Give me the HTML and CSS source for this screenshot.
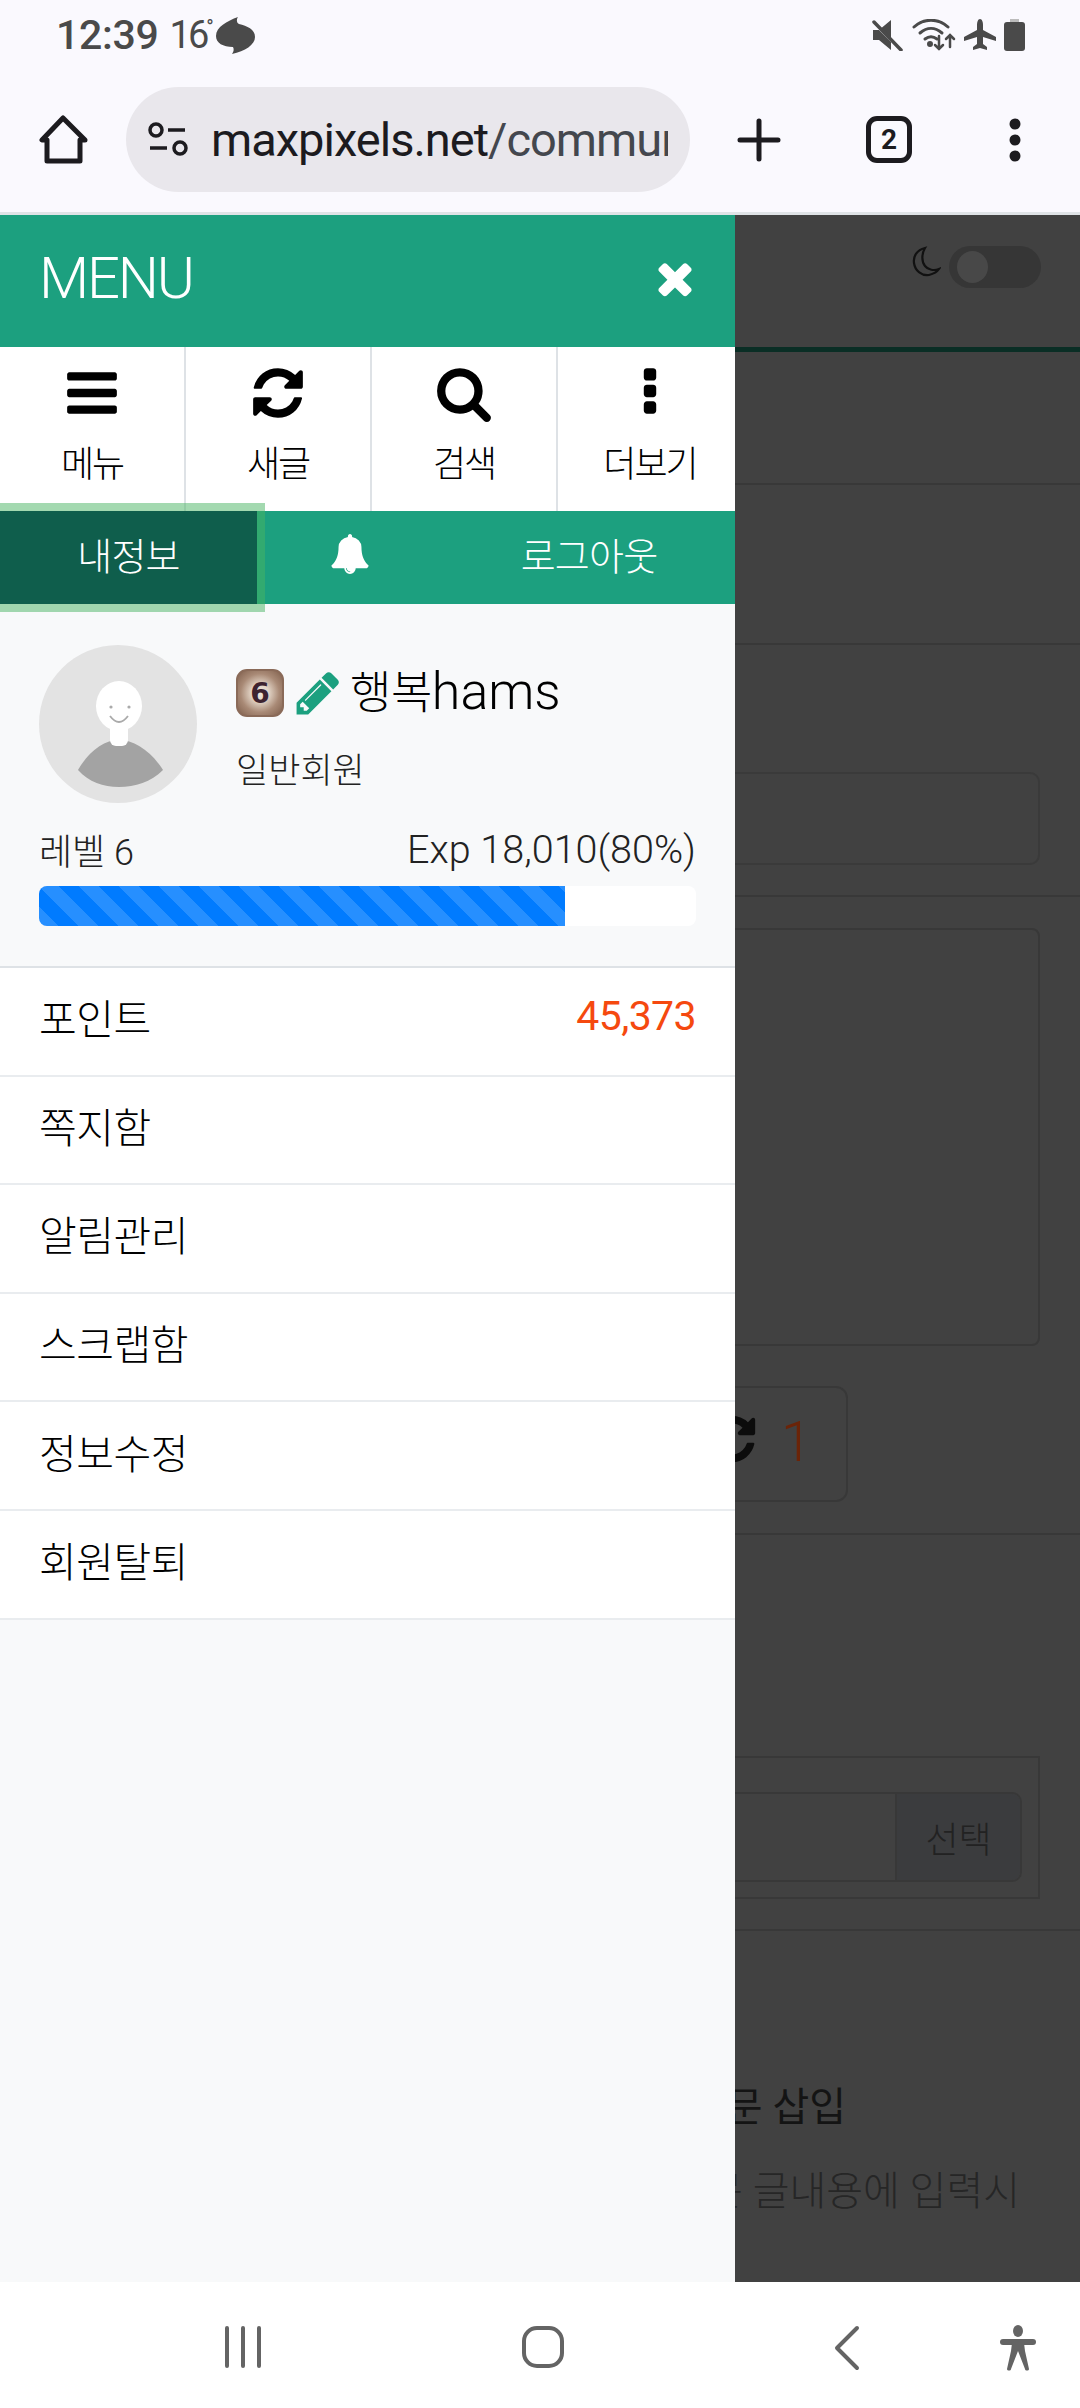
FILE: index.html
```html
<!DOCTYPE html>
<html lang="ko">
<head>
  <meta charset="utf-8">
  <title>maxpixels</title>
  <link rel="stylesheet" href="styles.css">
</head>
<body>

  <!-- phone status bar -->
  <div class="status-bar">
    <span class="clock">12:39</span>
    <span class="temp">16<sup>°</sup></span>
    <svg class="weather" width="41" height="37" viewBox="0 0 41 37"><path fill="#4a4a4a" d="M23 0C21 3 22 6 24 7 32 9 40 12 40 20 40 28 30 34 17 37 19 34 19 32 18 30 8 30 1 26 1 19 1 10 12 4 23 0z"/></svg>
    <span class="status-icons">
      <svg width="32" height="32" viewBox="0 0 32 32"><path fill="#4a4a4a" d="M1 11h6L19 1v20l-8-10zM1 11v10h6l12 10v-8L7 11z"/><path stroke="#4a4a4a" stroke-width="3.5" stroke-linecap="round" d="M2 3l27 28"/></svg>
      <svg width="44" height="32" viewBox="0 0 44 32" fill="none" stroke="#4a4a4a" stroke-width="3" stroke-linecap="round"><path d="M2 8c10-9 24-9 34 0"/><path d="M8 14c7-6 15-6 22 0"/><path d="M13 20c4-3 8-3 12 0"/><circle cx="18" cy="25" r="1.5" fill="#4a4a4a"/><path stroke-width="2.5" d="M27 17v13M23 26l4 4 4-4M38 28V16M34 20l4-4 4 4"/></svg>
      <svg width="32" height="32" viewBox="0 0 32 32"><path fill="#4a4a4a" d="M16 0c2 0 3 3 3 6v5l13 7v4l-13-4v7l4 3v3l-7-2-7 2v-3l4-3v-7L0 22v-4l13-7V6c0-3 1-6 3-6z"/></svg>
      <svg width="21" height="32" viewBox="0 0 21 32"><path fill="#bcbcbc" d="M6 0h9v4H6z"/><rect y="3" width="21" height="29" rx="3" fill="#4a4a4a"/></svg>
    </span>
  </div>

  <!-- browser toolbar -->
  <div class="toolbar">
    <svg class="home-icon" width="49" height="49" viewBox="0 0 49 49" fill="none" stroke="#1c1b1f" stroke-width="5" stroke-linejoin="round"><path d="M24 3L3 25h5v21h33V25h5z"/></svg>
    <div class="url-pill">
      <svg width="40" height="36" viewBox="0 0 40 36" fill="none" stroke="#1c1b1f" stroke-width="3.5"><circle cx="8" cy="8" r="6"/><path d="M20 8h17M2 26h17"/><circle cx="32" cy="26" r="6"/></svg>
      <div class="url-text"><span class="url-host">maxpixels.net</span>/community/write</div>
    </div>
    <svg class="plus-icon" width="44" height="44" viewBox="0 0 44 44"><path stroke="#1c1b1f" stroke-width="5" stroke-linecap="round" d="M22 3v38M3 22h38"/></svg>
    <div class="tab-count">2</div>
    <svg class="dots-icon" width="12" height="44" viewBox="0 0 12 44" fill="#1c1b1f"><circle cx="6" cy="6" r="5.5"/><circle cx="6" cy="22" r="5.5"/><circle cx="6" cy="38" r="5.5"/></svg>
  </div>

  <div class="main">

    <!-- page behind the drawer, dimmed -->
    <div class="page">
      <div class="page-top">
        <svg width="30" height="32" viewBox="0 0 30 32" fill="none" stroke="#111" stroke-width="2.2"><path d="M14 2C6 4 2 10 3 17c1 8 8 13 15 12 4-1 8-3 10-6-5 2-11 1-14-3-4-5-3-13 0-18z"/></svg>
        <div class="toggle"><div class="toggle-knob"></div></div>
      </div>
      <div class="page-row page-row-a"></div>
      <div class="page-row page-row-b"></div>
      <div class="page-row page-row-c"><div class="page-box"></div></div>
      <div class="page-row page-row-d">
        <div class="page-textarea"></div>
        <div class="recommend-btn">
          <svg class="recommend-icon" width="54" height="54" viewBox="0 0 1792 1792"><path fill="#0c0c0c" d="M1639 1056q0 5-1 7-64 268-268 434.5t-478 166.5q-146 0-282.5-55t-243.5-157l-129 129q-19 19-45 19t-45-19-19-45v-448q0-26 19-45t45-19h448q26 0 45 19t19 45-19 45l-137 137q71 66 161 102t187 36q134 0 250-65t186-179q11-17 53-117 8-23 30-23h192q13 0 22.5 9.5t9.5 22.5zm25-800v448q0 26-19 45t-45 19h-448q-26 0-45-19t-19-45 19-45l138-138q-148-137-349-137-134 0-250 65t-186 179q-11 17-53 117-8 23-30 23h-199q-13 0-22.5-9.5t-9.5-22.5v-7q65-268 270-434.5t480-166.5q146 0 284 55.5t245 156.5l130-129q19-19 45-19t45 19 19 45z"/></svg>
          <span class="recommend-count">1</span>
        </div>
      </div>
      <div class="page-row page-row-e">
        <div class="file-box">
          <div class="file-input"><span class="file-btn">선택</span></div>
        </div>
      </div>
      <div class="page-foot">
        <div class="foot-title">본문 삽입</div>
        <div class="foot-text">첨부한 파일을 본문 글내용에 입력시</div>
      </div>
    </div>

    <!-- side drawer -->
    <div class="drawer">
      <div class="drawer-head">
        <span class="drawer-title">MENU</span>
        <svg width="50" height="50" viewBox="0 0 1792 1792"><path fill="#fff" d="M1490 1322q0 40-28 68l-136 136q-28 28-68 28t-68-28l-294-294-294 294q-28 28-68 28t-68-28l-136-136q-28-28-28-68t28-68l294-294-294-294q-28-28-28-68t28-68l136-136q28-28 68-28t68 28l294 294 294-294q28-28 68-28t68 28l136 136q28 28 28 68t-28 68l-294 294 294 294q28 28 28 68z"/></svg>
      </div>

      <div class="quick-grid">
        <div class="quick-cell">
          <svg width="58" height="58" viewBox="0 0 1792 1792"><path d="M1664 1344v128q0 26-19 45t-45 19h-1408q-26 0-45-19t-19-45v-128q0-26 19-45t45-19h1408q26 0 45 19t19 45zm0-512v128q0 26-19 45t-45 19h-1408q-26 0-45-19t-19-45v-128q0-26 19-45t45-19h1408q26 0 45 19t19 45zm0-512v128q0 26-19 45t-45 19h-1408q-26 0-45-19t-19-45v-128q0-26 19-45t45-19h1408q26 0 45 19t19 45z"/></svg>
          <span>메뉴</span>
        </div>
        <div class="quick-cell">
          <svg width="58" height="58" viewBox="0 0 1792 1792"><path d="M1639 1056q0 5-1 7-64 268-268 434.5t-478 166.5q-146 0-282.5-55t-243.5-157l-129 129q-19 19-45 19t-45-19-19-45v-448q0-26 19-45t45-19h448q26 0 45 19t19 45-19 45l-137 137q71 66 161 102t187 36q134 0 250-65t186-179q11-17 53-117 8-23 30-23h192q13 0 22.5 9.5t9.5 22.5zm25-800v448q0 26-19 45t-45 19h-448q-26 0-45-19t-19-45 19-45l138-138q-148-137-349-137-134 0-250 65t-186 179q-11 17-53 117-8 23-30 23h-199q-13 0-22.5-9.5t-9.5-22.5v-7q65-268 270-434.5t480-166.5q146 0 284 55.5t245 156.5l130-129q19-19 45-19t45 19 19 45z"/></svg>
          <span>새글</span>
        </div>
        <div class="quick-cell">
          <svg width="58" height="58" viewBox="0 0 1792 1792"><path d="M1216 832q0-185-131.5-316.5t-316.5-131.5-316.5 131.5-131.5 316.5 131.5 316.5 316.5 131.5 316.5-131.5 131.5-316.5zm512 832q0 52-38 90t-90 38q-54 0-90-38l-343-342q-179 124-399 124-143 0-273.5-55.5t-225-150-150-225-55.5-273.5 55.5-273.5 150-225 225-150 273.5-55.5 273.5 55.5 225 150 150 225 55.5 273.5q0 220-124 399l343 343q37 37 37 90z"/></svg>
          <span>검색</span>
        </div>
        <div class="quick-cell">
          <svg width="58" height="58" viewBox="0 0 1792 1792"><path d="M1088 1248v192q0 40-28 68t-68 28h-192q-40 0-68-28t-28-68v-192q0-40 28-68t68-28h192q40 0 68 28t28 68zm0-512v192q0 40-28 68t-68 28h-192q-40 0-68-28t-28-68v-192q0-40 28-68t68-28h192q40 0 68 28t28 68zm0-512v192q0 40-28 68t-68 28h-192q-40 0-68-28t-28-68v-192q0-40 28-68t68-28h192q40 0 68 28t28 68z"/></svg>
          <span>더보기</span>
        </div>
      </div>

      <div class="tab-row">
        <div class="tab-item tab-active">내정보</div>
        <div class="tab-item tab-bell">
          <svg width="40" height="40" viewBox="0 0 1792 1792"><path fill="#fff" d="M912 1696q0-16-16-16-59 0-101.5-42.5t-42.5-101.5q0-16-16-16t-16 16q0 73 51.5 124.5t124.5 51.5q16 0 16-16zm816-288q0 52-38 90t-90 38h-448q0 106-75 181t-181 75-181-75-75-181h-448q-52 0-90-38t-38-90q50-42 91-88t85-119.5 74.5-158.5 50-206 19.5-260q0-152 117-282.5t307-158.5q-8-19-8-39 0-40 28-68t68-28 68 28 28 68q0 20-8 39 190 28 307 158.5t117 282.5q0 139 19.5 260t50 206 74.5 158.5 85 119.5 91 88z"/></svg>
        </div>
        <div class="tab-item tab-logout">로그아웃</div>
      </div>

      <div class="profile">
        <div class="profile-top">
          <svg class="avatar" width="158" height="158" viewBox="0 0 158 158">
            <circle cx="79" cy="79" r="79" fill="#e3e3e3"/>
            <path fill="#a3a3a3" d="M39 125C50 106 65 95 80 95s32 11 44 30c-12 12-28 17-44 17s-30-5-41-17z"/>
            <rect x="71" y="78" width="18" height="23" rx="6" fill="#fff"/>
            <ellipse cx="80" cy="61" rx="23" ry="25" fill="#fff"/>
            <circle cx="72" cy="62" r="1.6" fill="#aaa"/>
            <circle cx="90" cy="62" r="1.6" fill="#aaa"/>
            <path d="M71 71q9 12 18 0" fill="none" stroke="#aaa" stroke-width="1.8"/>
          </svg>
          <div class="profile-info">
            <div class="profile-name">
              <span class="level-badge">6</span>
              <svg class="pencil" width="50" height="50" viewBox="0 0 1792 1792"><path fill="#1ca07f" d="M491 1536l91-91-235-235-91 91v107h128v128h107zm523-928q0-22-22-22-10 0-17 7l-542 542q-7 7-7 17 0 22 22 22 10 0 17-7l542-542q7-7 7-17zm-54-192l416 416-832 832h-416v-416zm683 96q0 53-37 90l-166 166-416-416 166-165q36-38 90-38 53 0 91 38l235 234q37 39 37 91z"/></svg>
              <span class="nickname"><span class="nick-ko">행복</span>hams</span>
            </div>
            <div class="member-type">일반회원</div>
          </div>
        </div>
        <div class="level-row">
          <span>레벨 6</span>
          <span class="exp-text">Exp 18,010(80%)</span>
        </div>
        <div class="exp-bar"><div class="exp-fill"></div></div>
      </div>

      <ul class="menu-list">
        <li>포인트<span class="point">45,373</span></li>
        <li>쪽지함</li>
        <li>알림관리</li>
        <li>스크랩함</li>
        <li>정보수정</li>
        <li>회원탈퇴</li>
      </ul>
    </div>
  </div>

  <!-- android nav bar -->
  <div class="nav-bar">
    <svg class="nav-recents" width="40" height="44" viewBox="0 0 40 44" stroke="#646464" stroke-width="4" stroke-linecap="round"><path d="M4 3v38M20 3v38M36 3v38"/></svg>
    <svg class="nav-home" width="44" height="44" viewBox="0 0 44 44" fill="none" stroke="#646464" stroke-width="4"><rect x="3" y="3" width="38" height="38" rx="13"/></svg>
    <svg class="nav-back" width="26" height="46" viewBox="0 0 26 46" fill="none" stroke="#646464" stroke-width="4" stroke-linecap="round" stroke-linejoin="round"><path d="M23 3L3 23l20 20"/></svg>
    <svg class="nav-access" width="38" height="46" viewBox="0 0 38 46"><ellipse cx="19" cy="6" rx="5" ry="6" fill="#646464"/><rect x="1" y="14" width="36" height="6" rx="3" fill="#646464"/><path fill="#646464" d="M13 18h12l1 8 4 18c0 2-4 2-4 0l-7-18-7 18c0 2-4 2-4 0l4-18z"/></svg>
  </div>

</body>
</html>
```

FILE: styles.css
```css
* { box-sizing: border-box; }
html, body { margin: 0; padding: 0; }
body {
  width: 1080px;
  height: 2408px;
  overflow: hidden;
  display: flex;
  flex-direction: column;
  font-family: Roboto, "Noto Sans CJK KR", sans-serif;
  background: #fff;
}

/* status bar */
.status-bar { height: 70px; display: flex; align-items: center; padding: 0 55px 0 56px; background: #faf9fe; color: #4a4a4a; }
.clock { font-size: 41px; font-weight: 500; letter-spacing: -.3px; }
.temp { font-size: 38px; margin-left: 11px; letter-spacing: -3px; }
.temp sup { font-size: 20px; line-height: 0; }
.weather { margin-left: 4px; }
.status-icons { margin-left: auto; display: flex; align-items: center; gap: 8px; }

/* toolbar */
.toolbar { height: 145px; padding-bottom: 3px; display: flex; align-items: center; background: #faf9fe; border-bottom: 3px solid #dfe3e6; }
.home-icon { margin-left: 39px; flex: none; }
.url-pill { width: 564px; height: 105px; margin-left: 38px; flex: none; border-radius: 53px; background: #e9e7ec; display: flex; align-items: center; padding-left: 22px; }
.url-pill svg { flex: none; }
.url-text { margin-left: 23px; width: 457px; overflow: hidden; white-space: nowrap; font-size: 47px; letter-spacing: -1px; color: #44474e; }
.url-host { color: #1c1b1f; }
.plus-icon { margin-left: 47px; flex: none; }
.tab-count { margin-left: 85px; width: 46px; height: 47px; flex: none; border: 5px solid #1c1b1f; border-radius: 11px; display: flex; align-items: center; justify-content: center; font-size: 28px; font-weight: 700; color: #1c1b1f; }
.dots-icon { margin-left: 97px; flex: none; }

/* main area */
.main { position: relative; height: 2067px; flex: none; overflow: hidden; background: #414141; }

/* page behind */
.page { color: #222; }
.page-top { height: 137px; padding: 31px 39px 0 0; display: flex; justify-content: flex-end; gap: 8px; border-bottom: 5px solid #0a2e25; }
.toggle { width: 92px; height: 42px; border-radius: 21px; background: #363636; padding: 5px 8px; }
.toggle-knob { width: 31px; height: 32px; border-radius: 50%; background: #484848; }
.page-row { border-bottom: 2px solid #383838; }
.page-row-a { height: 133px; }
.page-row-b { height: 160px; }
.page-row-c { height: 252px; padding: 127px 40px 0 0; }
.page-box { height: 93px; border: 2px solid #3a3a3a; border-radius: 10px; }
.page-row-d { height: 638px; padding: 31px 40px 0 0; }
.page-textarea { height: 418px; border: 2px solid #383838; border-radius: 8px; }
.recommend-btn { width: 208px; height: 116px; margin: 40px 0 0 640px; border: 2px solid #383838; border-radius: 12px; display: flex; align-items: center; gap: 22px; padding-left: 63px; }
.recommend-icon { flex: none; margin-bottom: 10px; }
.recommend-count { font-size: 56px; font-weight: 300; color: #6b2408; margin-bottom: 4px; }
.page-row-e { height: 396px; padding: 221px 40px 0 0; }
.file-box { height: 143px; border: 2px solid #383838; padding: 34px 16px 0 0; }
.file-input { height: 90px; border: 2px solid #383838; border-radius: 0 10px 10px 0; display: flex; justify-content: flex-end; }
.file-btn { width: 125px; border-left: 2px solid #383838; background: #3b3c3e; border-radius: 0 8px 8px 0; display: flex; align-items: center; justify-content: center; font-size: 36px; font-weight: 300; color: #222; }
.page-foot { padding: 144px 60px 0 0; text-align: right; white-space: nowrap; }
.foot-title { font-size: 40px; color: #141414; padding-right: 174px; }
.foot-text { font-size: 40px; margin-top: 26px; font-weight: 300; color: #262626; }

/* drawer */
.drawer { position: absolute; top: 0; left: 0; bottom: 0; width: 735px; overflow: hidden; background: #f8f9fa; }
.drawer-head { height: 132px; display: flex; align-items: center; justify-content: space-between; padding: 0 35px 6px 39px; background: #1ca07f; color: #fff; }
.drawer-title { font-size: 58px; font-weight: 300; letter-spacing: -2.2px; }
.quick-grid { height: 164px; display: grid; grid-template-columns: repeat(4, 186px); background: #fff; }
.quick-cell { display: flex; flex-direction: column; align-items: center; padding-top: 17px; border-right: 2px solid #dee2e6; font-size: 36px; font-weight: 300; letter-spacing: -2px; color: #000; }
.quick-cell span { margin-top: 18px; line-height: 50px; }
.tab-row { height: 93px; display: flex; background: #1ca07f; color: #fff; font-size: 38px; font-weight: 300; letter-spacing: -.8px; }
.tab-item { display: flex; align-items: center; justify-content: center; padding-bottom: 8px; }
.tab-active { position: relative; width: 257px; background: #0f5e4c; box-shadow: 0 0 0 8px rgba(72, 180, 97, .5); }
.tab-bell { width: 186px; }
.tab-logout { width: 292px; }

.profile { height: 364px; padding: 41px 39px 0; border-bottom: 2px solid #dee2e6; }
.profile-top { display: flex; gap: 39px; }
.avatar { flex: none; }
.profile-name { display: flex; align-items: center; margin-top: 16px; height: 64px; }
.level-badge { width: 48px; height: 48px; border-radius: 11px; border: 2px solid #8a6a58; display: flex; align-items: center; justify-content: center; font-family: "DejaVu Sans", sans-serif; font-size: 28px; font-weight: 700; color: #3d2330; background: radial-gradient(circle at 50% 50%, #efe6dc 0, #e2d4c6 28%, #a98a76 62%, #7f5f4c 100%); }
.pencil { margin-left: 9px; }
.nickname { margin-left: 7px; margin-bottom: 8px; font-size: 52px; font-weight: 300; color: #000; }
.nick-ko { font-size: 45px; letter-spacing: -.5px; }
.member-type { margin-top: 17px; font-size: 35px; font-weight: 300; color: #222; }
.level-row { display: flex; justify-content: space-between; align-items: center; margin-top: 20px; font-size: 36px; font-weight: 300; color: #222; }
.exp-text { font-size: 39.5px; }
.exp-bar { height: 40px; margin-top: 11px; border-radius: 8px; overflow: hidden; background: #fff; }
.exp-fill { width: 80%; height: 100%; background-color: #007bff; background-image: linear-gradient(45deg, rgba(255,255,255,.15) 25%, transparent 25%, transparent 50%, rgba(255,255,255,.15) 50%, rgba(255,255,255,.15) 75%, transparent 75%); background-size: 40px 40px; }

.menu-list { list-style: none; margin: 0; padding: 0; background: #fff; }
.menu-list li { height: 108.6px; padding: 0 39px 10px; display: flex; align-items: center; justify-content: space-between; border-bottom: 2px solid #e9ecef; font-size: 41px; font-weight: 300; letter-spacing: -.5px; color: #000; }
.point { font-size: 41px; font-weight: 400; letter-spacing: -.6px; color: #f5490f; }

/* nav bar */
.nav-bar { flex: 1; display: flex; align-items: flex-start; padding-top: 43px; background: #fff; }
.nav-recents { margin-left: 223px; }
.nav-home { margin-left: 258px; }
.nav-back { margin-left: 269px; }
.nav-access { margin-left: 139px; }
```
